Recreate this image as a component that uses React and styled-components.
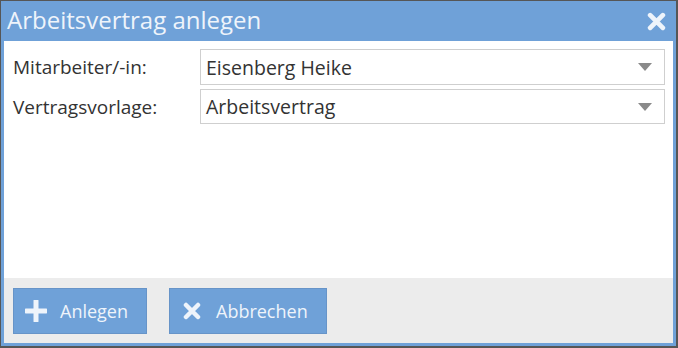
import React from "react";
import styled, { createGlobalStyle } from "styled-components";

const GlobalStyle = createGlobalStyle`
  html, body {
    margin: 0;
    padding: 0;
    background: #565656;
  }
  body {
    font-family: "Open Sans", "Noto Sans", sans-serif;
  }
`;

const Frame = styled.div`
  width: 678px;
  height: 348px;
  padding: 1px 2px 2px 1px;
  box-sizing: border-box;
`;

const Dialog = styled.div`
  width: 100%;
  height: 100%;
  box-sizing: border-box;
  border: 3px solid #6fa1d8;
  border-top: none;
  background: #6fa1d8;
  display: flex;
  flex-direction: column;
`;

const TitleBar = styled.div`
  height: 40px;
  display: flex;
  align-items: center;
  justify-content: space-between;
  padding: 0 7px 0 3px;
  color: #eef4fb;
  font-size: 24px;
  flex-shrink: 0;
`;

const Title = styled.div`
  margin-top: -4px;
`;

const Close = styled.button`
  border: none;
  background: transparent;
  padding: 0;
  display: flex;
  cursor: pointer;
`;

const Body = styled.div`
  flex: 1;
  background: #fff;
  padding: 8px 8px 0 8px;
  display: flex;
  flex-direction: column;
  gap: 4px;
`;

const Row = styled.div`
  display: flex;
  align-items: center;
`;

const Label = styled.label`
  width: 187px;
  color: #333;
  font-size: 19px;
  padding-left: 1px;
`;

const Select = styled.div`
  flex: 1;
  height: ${(p) => p.$h}px;
  box-sizing: border-box;
  border: 1px solid #cfcfcf;
  display: flex;
  align-items: center;
  justify-content: space-between;
  padding: 0 12px 0 5px;
  color: #333;
  font-size: 19.5px;
`;

const Arrow = styled.span`
  width: 0;
  height: 0;
  border-left: 7px solid transparent;
  border-right: 7px solid transparent;
  border-top: 8px solid #8a8a8a;
`;

const Footer = styled.div`
  height: 65px;
  background: #ececec;
  display: flex;
  align-items: center;
  gap: 22px;
  padding: 0 9px;
  flex-shrink: 0;
`;

const Button = styled.button`
  width: ${(p) => p.$w}px;
  height: 46px;
  box-sizing: border-box;
  background: #6fa1d8;
  border: 1px solid #6794c8;
  color: #eef4fb;
  font-family: "Open Sans", "Noto Sans", sans-serif;
  font-size: 18px;
  display: flex;
  align-items: center;
  gap: ${(p) => p.$gap}px;
  padding: 0 0 0 ${(p) => p.$pl}px;
  cursor: pointer;
`;

const PlusIcon = () => (
  <svg width="22" height="22" viewBox="0 0 22 22">
    <path d="M11 1v20M1 11h20" stroke="#eef4fb" strokeWidth="5" strokeLinecap="round" />
  </svg>
);

const XIcon = ({ size = 18 }) => (
  <svg width={size} height={size} viewBox="0 0 18 18">
    <path d="M3 3l12 12M15 3L3 15" stroke="#eef4fb" strokeWidth="4.5" strokeLinecap="round" />
  </svg>
);

export default function App() {
  return (
    <>
      <GlobalStyle />
      <Frame>
        <Dialog>
          <TitleBar>
            <Title>Arbeitsvertrag anlegen</Title>
            <Close>
              <XIcon size={19} />
            </Close>
          </TitleBar>
          <Body>
            <Row>
              <Label>Mitarbeiter/-in:</Label>
              <Select $h={36}>
                <span>Eisenberg Heike</span>
                <Arrow />
              </Select>
            </Row>
            <Row>
              <Label>Vertragsvorlage:</Label>
              <Select $h={35}>
                <span>Arbeitsvertrag</span>
                <Arrow />
              </Select>
            </Row>
          </Body>
          <Footer>
            <Button $w={134} $pl={11} $gap={13}>
              <PlusIcon />
              Anlegen
            </Button>
            <Button $w={158} $pl={13} $gap={15}>
              <XIcon />
              Abbrechen
            </Button>
          </Footer>
        </Dialog>
      </Frame>
    </>
  );
}
